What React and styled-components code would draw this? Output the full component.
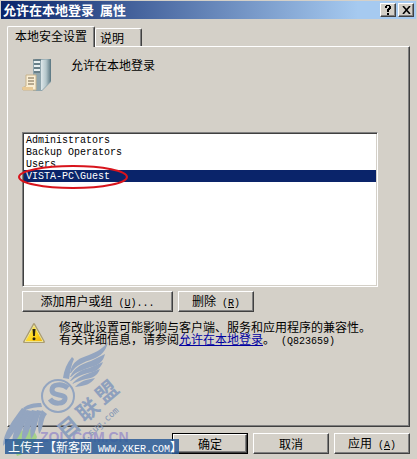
import styled, { createGlobalStyle } from 'styled-components';

const GlobalStyle = createGlobalStyle`
  * {
    box-sizing: border-box;
  }

  body {
    margin: 0;
    background: #d4d0c8;
    color: #000;
    font-family: "Noto Sans CJK SC", sans-serif;
    font-size: 12px;
  }
`;

const Dialog = styled.main`
  position: relative;
  display: flex;
  flex-direction: column;
  min-height: 100vh;
  padding: 1px 1px 5px;
`;

const TitleBar = styled.header`
  display: flex;
  align-items: center;
  gap: 2px;
  height: 18px;
  padding: 0 2px;
  background: linear-gradient(to right, #0a246a, #a6caf0 86%);
`;

const Title = styled.h1`
  flex: 1;
  margin: 0;
  color: #fff;
  font-size: 13px;
  font-weight: 700;
  line-height: 18px;
  white-space: pre;
`;

const Button = styled.button`
  padding: 0;
  border: 1px solid;
  border-color: #fff #404040 #404040 #fff;
  box-shadow: inset -1px -1px #808080;
  background: #d4d0c8;
  color: #000;
  font: inherit;
  line-height: 18px;
`;

const CaptionButton = styled(Button)`
  display: flex;
  align-items: center;
  justify-content: center;
  width: 16px;
  height: 14px;
`;

const Body = styled.div`
  flex: 1;
  display: flex;
  flex-direction: column;
  padding: 7px 6px 0;
`;

const Tabs = styled.div`
  display: flex;
  align-items: flex-end;
  height: 20px;
`;

const Tab = styled.button`
  position: relative;
  z-index: ${({ $active }) => ($active ? 1 : 0)};
  height: ${({ $active }) => ($active ? 21 : 18)}px;
  margin-bottom: ${({ $active }) => ($active ? -1 : 0)}px;
  padding: ${({ $active }) => ($active ? '0 7px 2px' : '0 17px 0 4px')};
  border: solid;
  border-width: 1px 1px 0;
  border-color: #fff #404040 #fff #fff;
  border-radius: 2px 2px 0 0;
  box-shadow: inset -1px 0 #808080;
  background: #d4d0c8;
  color: #000;
  font: inherit;
  line-height: 18px;
`;

const Panel = styled.section`
  flex: 1;
  padding: 12px 31px 12px 14px;
  border: 1px solid;
  border-color: #fff #404040 #404040 #fff;
  box-shadow: inset -1px -1px #808080;
`;

const PolicyHeader = styled.div`
  display: flex;
  gap: 17px;
  height: 73px;
`;

const PolicyName = styled.h2`
  margin: 0;
  font-size: 12px;
  font-weight: 400;
  line-height: 12px;
`;

const List = styled.ul`
  height: 155px;
  margin: 0;
  padding: 1px;
  border: 1px solid;
  border-color: #808080 #fff #fff #808080;
  box-shadow: inset 1px 1px #404040, inset -1px -1px #d4d0c8;
  background: #fff;
  list-style: none;
`;

const Account = styled.li`
  position: relative;
  height: 12px;
  padding: 1px 2px 0;
  background: ${({ $selected }) => ($selected ? '#0a246a' : 'transparent')};
  color: ${({ $selected }) => ($selected ? '#fff' : '#000')};
  font-family: "Liberation Mono", monospace;
  font-size: 10px;
  line-height: 12px;
`;

const Highlight = styled.svg`
  position: absolute;
  left: -6px;
  top: -5px;
  z-index: 1;
`;

const Actions = styled.div`
  display: flex;
  gap: 5px;
  margin-top: 4px;
`;

const ActionButton = styled(Button)`
  width: ${({ $wide }) => ($wide ? 151 : 76)}px;
  height: 21px;
`;

const Latin = styled.span`
  font-family: "Liberation Mono", monospace;
  font-size: 10px;
`;

const Notice = styled.div`
  display: flex;
  gap: 13px;
  margin-top: 9px;
`;

const NoticeText = styled.p`
  margin: 0;
  line-height: 12px;
  white-space: nowrap;

  a {
    color: #0000a0;
  }
`;

const Footer = styled.footer`
  display: flex;
  justify-content: flex-end;
  gap: 5px;
  margin-top: 6px;
`;

const DefaultFrame = styled.span`
  border: 1px solid #000;

  button {
    display: block;
    width: 74px;
    height: 19px;
    line-height: 16px;
  }
`;

const Watermark = styled.svg`
  position: absolute;
  left: 0;
  bottom: 0;
  pointer-events: none;
`;

const UploadTag = styled.div`
  position: absolute;
  left: 5px;
  bottom: 5px;
  width: 174px;
  height: 15px;
  padding-left: 3px;
  background: rgba(42, 92, 152, 0.85);
  color: #fff;
  line-height: 15px;
  white-space: nowrap;
`;

const accounts = ['Administrators', 'Backup Operators', 'Users', 'VISTA-PC\\Guest'];

function ServerIcon() {
  return (
    <svg width="32" height="34" viewBox="0 0 32 34" aria-hidden="true">
      <defs>
        <linearGradient id="tower" x1="0" x2="1">
          <stop offset="0" stopColor="#dfe8ea" />
          <stop offset="0.5" stopColor="#b4c6cb" />
          <stop offset="1" stopColor="#587580" />
        </linearGradient>
      </defs>
      <path d="M11 1l3-1h15v23l-9 9h-9z" fill="#8fa5ad" />
      <path d="M19 1l10-1v22l-9 9h-1z" fill="url(#tower)" />
      <path d="M12 3h6M12 7h6M12 11h6" stroke="#e9f1f2" strokeWidth="2" />
      <path d="M11 1h8M12 5h6M12 9h6M12 13h6" stroke="#435b65" />
      <path d="M4 16h10v15H1l-1-2 4-2z" fill="#f9eed4" stroke="#c9b48c" />
      <path d="M6 19h6M6 22h6M6 25h6" stroke="#75654b" />
      <path d="M0 28h11v3H1z" fill="#e8c995" />
    </svg>
  );
}

function WarningIcon() {
  return (
    <svg width="24" height="24" viewBox="0 0 24 24" aria-hidden="true">
      <defs>
        <linearGradient id="warn" x1="0" x2="1" y1="0" y2="1">
          <stop offset="0" stopColor="#fff36b" />
          <stop offset="0.6" stopColor="#ffd51e" />
          <stop offset="1" stopColor="#eda900" />
        </linearGradient>
      </defs>
      <path d="M12 3l10 18H2z" fill="url(#warn)" stroke="#aa9c72" strokeWidth="2" strokeLinejoin="round" />
      <path d="M12 4.500l9 16H3z" fill="none" stroke="#fff7a0" strokeWidth="0.8" />
      <path d="M10.500 8h3l-.6 7h-1.800z" fill="#2b2410" />
      <circle cx="12" cy="17.800" r="1.500" fill="#2b2410" />
    </svg>
  );
}

function SiteMark() {
  return (
    <Watermark width="134" height="120" viewBox="0 339 134 120" aria-hidden="true">
      <path d="M19 433c8-7 15-4 18 4-3 10-10 16-20 19-4-8-3-17 2-23z" fill="#8ed26c" opacity="0.7" />
      <text x="40" y="442" fill="#a49bc8" fontFamily="Liberation Sans, sans-serif" fontSize="14" fontWeight="700">
        ZOL.COM.CN
      </text>
      <g fill="#93a5c0">
        <path d="M63 378c1-8 4-15 9-21l2 2c-3 7-4 13-5 20z" />
        <path d="M70 373c2-12 10-15 19-18 8-3 14-7 19-13-2 9-7 14-15 17-9 3-17 6-22 14z" />
        <path d="M70 377c5-11 13-13 21-16l14-7c-2 8-6 11-14 13-8 3-14 4-20 10z" />
        <path d="M70 381c6-9 12-11 19-13l14-6c-3 7-7 10-15 11-7 2-12 4-17 8z" />
        <path d="M72 384c5-6 10-8 15-10l13-5c-3 7-7 9-14 10-5 1-9 3-14 5z" />
        <path d="M75 387c4-4 7-6 11-7l9-2c-4 6-10 8-20 9z" />
        <path d="M41 403c-7 0-13 1-18 5l2 2c6-2 11-3 17-3z" />
        <path d="M22 408l5 2C19 422 15 434 3 446c0-13 10-26 19-38z" />
        <path d="M27 410l5 1c-8 10-10 25-20 34 0-13 6-25 15-35z" />
        <path d="M32 410l5 1c-7 10-6 23-15 32-1-13 3-24 10-33z" />
        <path d="M37 410l5 1c-6 9-4 20-11 28-2-12 0-21 6-29z" />
        <path d="M42 410l5 4c-5 6-3 14-8 20-2-9-1-17 3-24z" />
      </g>
      <circle cx="58" cy="396" r="16" fill="#d4d0c8" stroke="#93a5c0" strokeWidth="2" />
      <path d="M68 388c-6-5-16-4-16 2 0 7 14 3 13 9-1 5-11 6-15 0" fill="none" stroke="#93a5c0" strokeWidth="5" />
      <g fill="#8ea0bd" fontSize="22" fontWeight="700" textAnchor="middle">
        <text transform="translate(74 434) rotate(-40)">目</text>
        <text transform="translate(93 416) rotate(-40)">联</text>
        <text transform="translate(112 398) rotate(-40)">盟</text>
      </g>
      <text transform="translate(75 451) rotate(-42)" fill="#7f93b3" fontFamily="DejaVu Sans Mono, monospace" fontSize="9">
        www.sug.com
      </text>
    </Watermark>
  );
}

function App() {
  return (
    <Dialog>
      <GlobalStyle />
      <TitleBar>
        <Title>允许在本地登录  属性</Title>
        <CaptionButton aria-label="帮助">
          <svg width="8" height="10" viewBox="0 0 8 10" aria-hidden="true">
            <path d="M1 1h1V0h4v1h1v3H6v1H5v2H3V4h1V3h1V1H3v2H1zM3 8h2v2H3z" />
          </svg>
        </CaptionButton>
        <CaptionButton aria-label="关闭">
          <svg width="9" height="8" viewBox="0 0 9 8" stroke="#000" strokeWidth="1.600" aria-hidden="true">
            <path d="M1 0l7 8M8 0L1 8" />
          </svg>
        </CaptionButton>
      </TitleBar>
      <Body>
        <Tabs role="tablist">
          <Tab role="tab" aria-selected="true" $active>本地安全设置</Tab>
          <Tab role="tab" aria-selected="false">说明</Tab>
        </Tabs>
        <Panel>
          <PolicyHeader>
            <ServerIcon />
            <PolicyName>允许在本地登录</PolicyName>
          </PolicyHeader>
          <List>
            {accounts.map((name, index) => (
              <Account key={name} $selected={index === 3}>
                {name}
                {index === 3 && (
                  <Highlight width="110" height="25" viewBox="0 0 110 25" aria-hidden="true">
                    <ellipse cx="55" cy="12" rx="54" ry="11" fill="none" stroke="#d8141c" strokeWidth="2" />
                  </Highlight>
                )}
              </Account>
            ))}
          </List>
          <Actions>
            <ActionButton $wide>添加用户或组<Latin> (<u>U</u>)...</Latin></ActionButton>
            <ActionButton>删除<Latin> (<u>R</u>)</Latin></ActionButton>
          </Actions>
          <Notice>
            <WarningIcon />
            <NoticeText>
              修改此设置可能影响与客户端、服务和应用程序的兼容性。<br />
              有关详细信息，请参阅<a href="#policy">允许在本地登录</a>。<Latin> (Q823659)</Latin>
            </NoticeText>
          </Notice>
        </Panel>
        <Footer>
          <DefaultFrame><Button>确定</Button></DefaultFrame>
          <ActionButton>取消</ActionButton>
          <ActionButton>应用<Latin> (<u>A</u>)</Latin></ActionButton>
        </Footer>
      </Body>
      <SiteMark />
      <UploadTag>上传于【新客网<Latin> WWW.XKER.COM</Latin>】</UploadTag>
    </Dialog>
  );
}

export default App;
